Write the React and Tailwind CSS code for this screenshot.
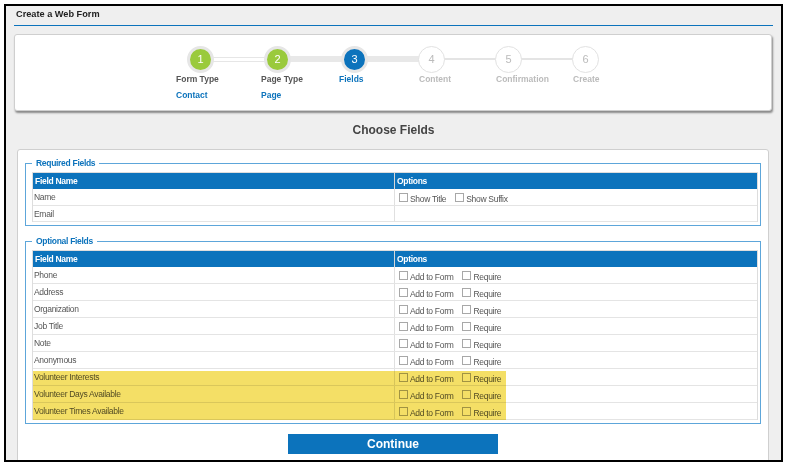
// Create a Web Form, paso 3: elegir campos
const AZUL = 'bg-[#0c73bc]';

const PASOS = [
  { n: 1, titulo: 'Form Type', valor: 'Contact', estado: 'hecho', pl: 'pl-[14px]', linea: 'top-[11px] h-[5px] border border-[#e6e6e6] bg-white' },
  { n: 2, titulo: 'Page Type', valor: 'Page', estado: 'hecho', pl: 'pl-[22px]', linea: 'top-[10px] h-[6px] bg-[#e8e8e8]' },
  { n: 3, titulo: 'Fields', estado: 'actual', pl: 'pl-[23px]', linea: 'top-[10px] h-[6px] bg-[#e8e8e8]' },
  { n: 4, titulo: 'Content', pl: 'pl-[26px]', linea: 'top-[12px] h-[2px] bg-[#e4e4e4]' },
  { n: 5, titulo: 'Confirmation', pl: 'pl-[26px]', linea: 'top-[12px] h-[2px] bg-[#e4e4e4]' },
  { n: 6, titulo: 'Create', pl: 'pl-[26px]' },
];

const OPCIONALES = ['Phone', 'Address', 'Organization', 'Job Title', 'Note', 'Anonymous', 'Volunteer Interests', 'Volunteer Days Available', 'Volunteer Times Available'];

function Paso({ paso }) {
  const { n, titulo, valor, estado, pl, linea } = paso;
  let circulo = 'border border-[#e2e2e2] bg-white text-[#bbbbbb]';
  if (estado === 'hecho') circulo = 'border-[3px] border-[#e6e6e6] bg-[#9aca3c] text-white';
  if (estado === 'actual') circulo = 'border-[3px] border-[#e6e6e6] bg-[#0c73bc] text-white';
  let colorTitulo = 'text-[#bbbbbb]';
  if (estado === 'hecho') colorTitulo = 'text-[#555555]';
  if (estado === 'actual') colorTitulo = 'text-[#0c73bc]';
  return (
    <div className="relative w-[77px] shrink-0">
      {linea && <div className={`absolute left-[39px] w-[77px] ${linea}`} />}
      <div className={`relative mx-auto flex size-[27px] items-center justify-center rounded-full text-[11px] ${circulo}`}>{n}</div>
      <div className={`-mt-[1px] text-[8.5px] leading-[14px] font-bold whitespace-nowrap ${pl} ${colorTitulo}`}>{titulo}</div>
      {valor && <div className={`mt-[2px] text-[8.5px] leading-[14px] font-bold whitespace-nowrap text-[#0c73bc] ${pl}`}>{valor}</div>}
    </div>
  );
}

function Casilla({ texto }) {
  return (
    <span className="flex gap-[2px]">
      <span className="mt-[4px] size-[9px] border border-[#a8a8a8]" />
      <span className="pt-[2px]">{texto}</span>
    </span>
  );
}

function Cabecera() {
  return (
    <div className={`flex h-[16px] ${AZUL} text-[8.5px] leading-[16px] font-bold tracking-[-0.3px] text-white`}>
      <div className="w-[362px] border-r border-[#d8d8d8] pl-[2px]">Field Name</div>
      <div className="pl-[2px]">Options</div>
    </div>
  );
}

function Fila({ nombre, children, alto = 'h-[17px]' }) {
  return (
    <div className={`flex ${alto} border-b border-[#e4e4e4] text-[8.5px] leading-[17px] tracking-[-0.3px] text-[#555555]`}>
      <div className="w-[362px] border-r border-[#e0e0e0] pl-[1px]">{nombre}</div>
      <div className="flex gap-[9px] pl-[4px]">{children}</div>
    </div>
  );
}

function Grupo({ titulo, children }) {
  return (
    <fieldset className="border border-[#5da6da] pt-[3px] pr-[2px] pb-[3px] pl-[6px]">
      <legend className="px-[4px] text-[8.5px] leading-[11px] font-bold tracking-[-0.3px] text-[#0c73bc]">{titulo}</legend>
      <div className="relative border-x border-t border-[#dddddd]">{children}</div>
    </fieldset>
  );
}

export default function App() {
  return (
    <div className="h-[466px] w-[787px] overflow-hidden bg-white pt-[4px] pl-[4px] font-['Liberation_Sans',Arial,sans-serif]">
      <div className="h-[458px] w-[779px] overflow-hidden border-2 border-black bg-[#efefef] px-[8px] pt-[2px]">
        <div className="border-b border-[#0c73bc] pb-[4px] pl-[2px] text-[9.2px] leading-[13px] font-bold text-[#222222]">Create a Web Form</div>
        <div className="mt-[8px] mr-[1px] h-[77px] rounded-[3px] border border-[#cfcfcf] bg-white pt-[11px] shadow-[1px_2px_2px_#8a8a8a]">
          <div className="flex justify-center">
            {PASOS.map((p) => <Paso key={p.n} paso={p} />)}
          </div>
        </div>
        <div className="mt-[11px] text-center text-[12px] leading-[16px] font-bold text-[#444444]">Choose Fields</div>
        <div className="mt-[11px] ml-[3px] h-[320px] w-[752px] rounded-t-[3px] border border-[#cfcfcf] bg-white px-[7px] pt-[8px]">
          <Grupo titulo="Required Fields">
            <Cabecera />
            <Fila nombre="Name">
              <Casilla texto="Show Title" />
              <Casilla texto="Show Suffix" />
            </Fila>
            <Fila nombre="Email" alto="h-[16px]" />
          </Grupo>
          <div className="h-[10px]" />
          <Grupo titulo="Optional Fields">
            <Cabecera />
            {OPCIONALES.map((nombre) => (
              <Fila key={nombre} nombre={nombre}>
                <Casilla texto="Add to Form" />
                <Casilla texto="Require" />
              </Fila>
            ))}
            {/* resaltado amarillo encima de las tres filas de voluntarios */}
            <div className="absolute bottom-0 left-0 h-[49px] w-[473px] bg-[#f4df66] mix-blend-multiply" />
          </Grupo>
          <button className={`mx-auto mt-[10px] block h-[20px] w-[210px] ${AZUL} text-[12px] font-bold text-white`}>Continue</button>
        </div>
      </div>
    </div>
  );
}
